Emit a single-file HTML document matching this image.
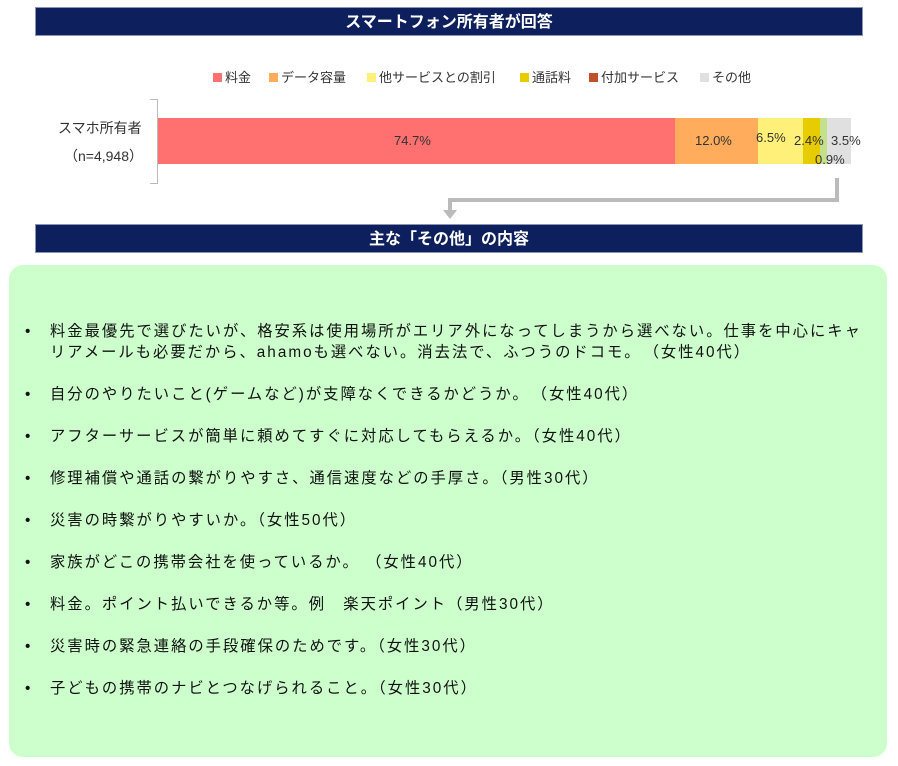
<!DOCTYPE html>
<html><head><meta charset="utf-8"><style>
body{margin:0;width:898px;height:766px;background:#fff;font-family:"Liberation Sans","Noto Sans CJK JP",sans-serif;position:relative;overflow:hidden;color:#222}
.hd{position:absolute;left:35px;width:828px;height:29px;background:#0d1f5c;color:#fff;font-weight:bold;font-size:16px;text-align:center;line-height:29px;border:1px solid #8a93b3;box-sizing:border-box}
.lg{position:absolute;top:67px;font-size:13px;color:#333;white-space:nowrap}
.lg i{display:inline-block;width:9px;height:9px;margin-right:3px;vertical-align:0}
.seg{position:absolute;top:118px;height:46px}
.pl{position:absolute;font-size:13px;color:#333}
.box{position:absolute;left:9px;top:265px;width:878px;height:492px;background:#ccffcc;border-radius:14px}
ul{position:absolute;left:0;top:56px;margin:0;padding:0;list-style:none;font-size:15.3px;color:#111;letter-spacing:2px}
li{position:relative;padding-left:41px;width:830px;line-height:21px;margin-bottom:21px;white-space:nowrap}
li:before{content:"•";position:absolute;left:16px}
</style></head><body>
<div class="hd" style="top:7px">スマートフォン所有者が回答</div>
<div class="lg" style="left:213px"><i style="background:#ff7070"></i>料金</div>
<div class="lg" style="left:269px"><i style="background:#ffac5c"></i>データ容量</div>
<div class="lg" style="left:367px"><i style="background:#fff07a"></i>他サービスとの割引</div>
<div class="lg" style="left:520px"><i style="background:#e6cc00"></i>通話料</div>
<div class="lg" style="left:589px"><i style="background:#c0502a"></i>付加サービス</div>
<div class="lg" style="left:700px"><i style="background:#e0e0e0"></i>その他</div>
<div class="pl" style="left:58px;top:118px;font-size:14px">スマホ所有者</div>
<div class="pl" style="left:64px;top:146px;font-size:14px">（n=4,948）</div>
<div style="position:absolute;left:150px;top:99px;width:7px;height:83px;border:1px solid #bbb;border-left:none"></div>
<div class="seg" style="left:158px;width:517px;background:#ff7070"></div>
<div class="seg" style="left:675px;width:83px;background:#ffac5c"></div>
<div class="seg" style="left:758px;width:45px;background:#fff07a"></div>
<div class="seg" style="left:803px;width:17px;background:#e6cc00"></div>
<div class="seg" style="left:820px;width:7px;background:#c5e08a"></div>
<div class="seg" style="left:827px;width:24px;background:#e0e0e0"></div>
<div class="pl" style="left:394px;top:133px">74.7%</div>
<div class="pl" style="left:695px;top:133px">12.0%</div>
<div class="pl" style="left:756px;top:130px">6.5%</div>
<div class="pl" style="left:794px;top:133px">2.4%</div>
<div class="pl" style="left:831px;top:133px">3.5%</div>
<div class="pl" style="left:815px;top:152px">0.9%</div>
<svg style="position:absolute;left:0;top:0" width="898" height="230"><path d="M837 178V200H450V212" fill="none" stroke="#bbb" stroke-width="4"/><path d="M443 210H457L450 219Z" fill="#bbb"/></svg>
<div class="hd" style="top:224px">主な「その他」の内容</div>
<div class="box"><ul>
<li>料金最優先で選びたいが、格安系は使用場所がエリア外になってしまうから選べない。仕事を中心にキャ<br>リアメールも必要だから、ahamoも選べない。消去法で、ふつうのドコモ。　（女性40代）</li>
<li>自分のやりたいこと(ゲームなど)が支障なくできるかどうか。　（女性40代）</li>
<li>アフターサービスが簡単に頼めてすぐに対応してもらえるか。（女性40代）</li>
<li>修理補償や通話の繋がりやすさ、通信速度などの手厚さ。（男性30代）</li>
<li>災害の時繋がりやすいか。（女性50代）</li>
<li>家族がどこの携帯会社を使っているか。 （女性40代）</li>
<li>料金。ポイント払いできるか等。例　楽天ポイント（男性30代）</li>
<li>災害時の緊急連絡の手段確保のためです。（女性30代）</li>
<li>子どもの携帯のナビとつなげられること。（女性30代）</li>
</ul></div>
</body></html>
